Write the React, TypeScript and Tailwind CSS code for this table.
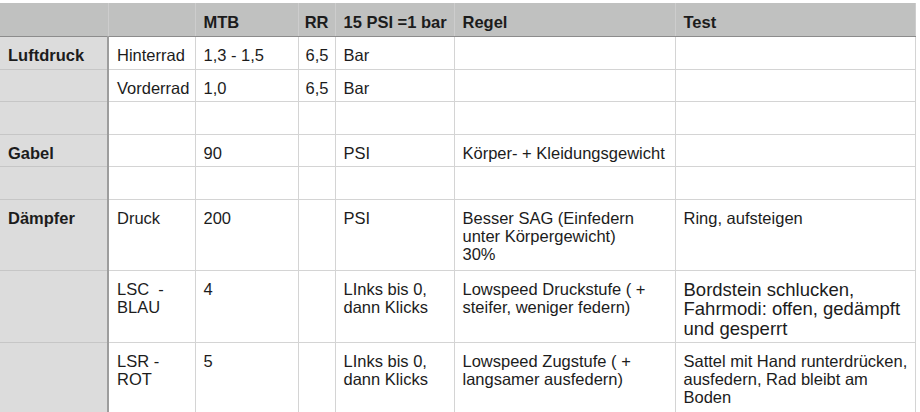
import React from 'react';

type Row = {
  h: string;
  label?: string;
  cells: React.ReactNode[];
};

const COLS = [108, 87, 103, 37, 119, 221, 240];

const HEAD = ['', 'MTB', 'RR', '15 PSI =1 bar', 'Regel', 'Test'];

const ROWS: Row[] = [
  { h: 'h-[33px]', label: 'Luftdruck', cells: ['Hinterrad', '1,3 - 1,5', '6,5', 'Bar', '', ''] },
  { h: 'h-[32px]', cells: ['Vorderrad', '1,0', '6,5', 'Bar', '', ''] },
  { h: 'h-[33px]', cells: ['', '', '', '', '', ''] },
  { h: 'h-[32px]', label: 'Gabel', cells: ['', '90', '', 'PSI', 'Körper- + Kleidungsgewicht', ''] },
  { h: 'h-[33px]', cells: ['', '', '', '', '', ''] },
  {
    h: 'h-[71px]',
    label: 'Dämpfer',
    cells: [
      'Druck',
      '200',
      '',
      'PSI',
      <>
        Besser SAG (Einfedern
        <br />
        unter Körpergewicht)
        <br />
        30%
      </>,
      'Ring, aufsteigen',
    ],
  },
  {
    h: 'h-[72px]',
    cells: [
      <>
        LSC&nbsp; -
        <br />
        BLAU
      </>,
      '4',
      '',
      <>
        LInks bis 0,
        <br />
        dann Klicks
      </>,
      <>
        Lowspeed Druckstufe ( +
        <br />
        steifer, weniger federn)
      </>,
      <span className="text-[18.5px] leading-[19.5px]">
        Bordstein schlucken,
        <br />
        Fahrmodi: offen, gedämpft
        <br />
        und gesperrt
      </span>,
    ],
  },
  {
    h: 'h-[72px]',
    cells: [
      <>
        LSR -
        <br />
        ROT
      </>,
      '5',
      '',
      <>
        LInks bis 0,
        <br />
        dann Klicks
      </>,
      <>
        Lowspeed Zugstufe ( +
        <br />
        langsamer ausfedern)
      </>,
      <>
        Sattel mit Hand runterdrücken,
        <br />
        ausfedern, Rad bleibt am
        <br />
        Boden
      </>,
    ],
  },
];

export default function App(): React.ReactElement {
  return (
    <div className="h-[412px] w-[920px] overflow-hidden bg-white pt-[3px] font-['Liberation_Sans',Arial,sans-serif] text-[16.5px] leading-[18px] text-[#1c1c1c]">
      <table className="w-[915px] table-fixed border-collapse whitespace-nowrap">
        <colgroup>
          {COLS.map((w, i) => (
            <col key={i} style={{ width: w }} />
          ))}
        </colgroup>
        <thead>
          <tr className="h-[33px] bg-[#c0c1c0]">
            <th className="border-r border-b border-r-[#cdcdcd] border-b-[#8c8c8c]" />
            {HEAD.map((t, i) => (
              <th
                key={i}
                className={`overflow-visible border-b border-l border-b-[#8c8c8c] border-l-[#cdcdcd] pt-[10px] align-top font-bold ${
                  i === 2 ? 'pr-[6px] pl-0 text-right' : 'pr-1 pl-2 text-left'
                } ${i === 5 ? 'border-r border-r-[#cdcdcd]' : ''}`}
              >
                {t}
              </th>
            ))}
          </tr>
        </thead>
        <tbody>
          {ROWS.map((r, ri) => (
            <tr key={ri} className={r.h}>
              <td className="border-t border-r-2 border-b border-t-[#c6c6c6] border-r-[#9d9d9d] border-b-[#c6c6c6] bg-[#dcdcdc] px-2 pt-[9px] align-top font-bold">
                {r.label}
              </td>
              {r.cells.map((c, ci) => (
                <td
                  key={ci}
                  className={`border border-[#d4d4d4] pt-[9px] align-top ${
                    ci === 2 ? 'pr-[6px] text-right' : 'pr-1 pl-2 text-left'
                  }`}
                >
                  {c}
                </td>
              ))}
            </tr>
          ))}
        </tbody>
      </table>
    </div>
  );
}
